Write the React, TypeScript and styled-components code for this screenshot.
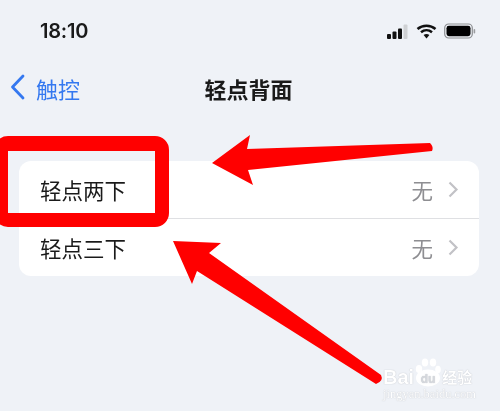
import React from "react";
import styled, { createGlobalStyle } from "styled-components";

const GlobalStyle = createGlobalStyle`
  html, body {
    margin: 0;
    padding: 0;
    background: #eff2f7;
  }
  * {
    box-sizing: border-box;
  }
`;

const cjk = `"Noto Sans CJK SC", "Noto Sans", sans-serif`;

const Screen = styled.div`
  position: relative;
  width: 500px;
  height: 411px;
  overflow: hidden;
  background: #eff2f7;
  font-family: ${cjk};
  color: #1a1a1a;
  filter: blur(0.35px);
`;

const StatusBar = styled.div`
  display: flex;
  justify-content: space-between;
  align-items: center;
  height: 20px;
  margin-top: 21px;
  padding: 0 24px 0 40px;
`;

const Time = styled.span`
  font-family: Inter, "Liberation Sans", sans-serif;
  font-size: 20px;
  font-weight: 600;
  letter-spacing: -0.2px;
`;

const StatusIcons = styled.div`
  display: flex;
  align-items: center;
  gap: 7px;
`;

const NavBar = styled.div`
  position: relative;
  display: flex;
  justify-content: center;
  align-items: center;
  height: 30px;
  margin-top: 32px;
  padding-right: 3px;
`;

const Back = styled.div`
  position: absolute;
  left: 10px;
  top: 0;
  height: 30px;
  display: flex;
  align-items: center;
  gap: 11px;
  color: #3478f0;
  font-size: 22px;
`;

const BackIcon = styled.svg`
  margin-top: -2px;
`;

const Title = styled.span`
  font-size: 22px;
  font-weight: 700;
`;

const Card = styled.div`
  margin: 58px 21px 0 19px;
  background: #fff;
  border-radius: 12px;
`;

const Row = styled.div<{ $divider?: boolean }>`
  display: flex;
  align-items: center;
  height: ${(p) => (p.$divider ? "58px" : "57px")};
  padding: 0 20px 0 21px;
  font-size: 21.5px;
  border-top: ${(p) => (p.$divider ? "1px solid #dfe0e3" : "none")};
`;

const Label = styled.span`
  flex: 1;
`;

const Value = styled.span`
  color: #8e8e92;
  margin-right: 15px;
`;

const Overlay = styled.svg`
  position: absolute;
  left: 0;
  top: 0;
`;

const Highlight = styled.div`
  position: absolute;
  left: -6px;
  top: 136px;
  width: 175px;
  height: 91px;
  border: 15px solid #ff0000;
  border-width: 15px 14px 14px 14px;
  border-radius: 14px;
`;

const Watermark = styled.div`
  position: absolute;
  left: 383px;
  top: 357px;
  width: 112px;
  color: #fff;
  text-shadow: 0 0 1px rgba(120, 125, 135, 0.55);
`;

const WatermarkTop = styled.div`
  display: flex;
  align-items: flex-end;
  height: 31px;
  font-family: "Liberation Sans", sans-serif;
  font-size: 20px;
  font-weight: 700;
  line-height: 22px;
`;

const WatermarkCn = styled.span`
  font-family: ${cjk};
  font-size: 15px;
  line-height: 22px;
  margin-left: 1px;
`;

const WatermarkUrl = styled.div`
  font-family: "Liberation Serif", serif;
  font-size: 12.5px;
  line-height: 12px;
  white-space: nowrap;
`;

const Chevron = () => (
  <svg width="11" height="17" viewBox="0 0 11 17">
    <path d="M1.5 1.5 L8.5 8.5 L1.5 15.5" fill="none" stroke="#c2c2c6" strokeWidth="2.2" />
  </svg>
);

const Rows = [
  { text: "轻点两下", divider: false },
  { text: "轻点三下", divider: true },
];

export default function App() {
  return (
    <Screen>
      <GlobalStyle />
      <StatusBar>
        <Time>18:10</Time>
        <StatusIcons>
          <svg width="22" height="15" viewBox="0 0 22 15">
            <rect x="0" y="10" width="4" height="5" rx="1" fill="#111" />
            <rect x="5.5" y="7.5" width="4" height="7.5" rx="1" fill="#111" />
            <rect x="11" y="4.5" width="4" height="10.5" rx="1" fill="#111" />
            <rect x="16.5" y="0.5" width="4" height="14.5" rx="1" fill="#cfd1d4" />
          </svg>
          <svg width="21" height="15" viewBox="0 0 21 15">
            <path d="M1.5 5 C6.5 0.6 14.5 0.6 19.5 5" fill="none" stroke="#111" strokeWidth="2.5" />
            <path d="M5 8.2 C8.2 5.5 12.8 5.5 16 8.2" fill="none" stroke="#111" strokeWidth="2.5" />
            <path d="M7.6 11 L10.5 14.5 L13.4 11 C11.6 9.6 9.4 9.6 7.6 11 Z" fill="#111" />
          </svg>
          <svg width="32" height="16" viewBox="0 0 32 16">
            <rect x="0.7" y="1" width="27.6" height="14" rx="4" fill="none" stroke="#8d8f92" strokeWidth="1.2" />
            <rect x="2.5" y="2.8" width="24" height="10.4" rx="2.4" fill="#000" />
            <rect x="29.6" y="6" width="1.6" height="4.5" rx="0.8" fill="#9a9c9f" />
          </svg>
        </StatusIcons>
      </StatusBar>
      <NavBar>
        <Back>
          <BackIcon width="15" height="26" viewBox="0 0 15 26">
            <path d="M13 2 L2.5 13 L13 24" fill="none" stroke="#3478f0" strokeWidth="2.8" strokeLinecap="round" strokeLinejoin="round" />
          </BackIcon>
          <span>触控</span>
        </Back>
        <Title>轻点背面</Title>
      </NavBar>
      <Card>
        {Rows.map((row) => (
          <Row key={row.text} $divider={row.divider}>
            <Label>{row.text}</Label>
            <Value>无</Value>
            <Chevron />
          </Row>
        ))}
      </Card>
      <Highlight />
      <Overlay width="500" height="411" viewBox="0 0 500 411">
        <path d="M212 163 L250 135 L247 149 L430 143 Q434 147 432 151 L248 170 L253 185 Z" fill="#ff0000" />
        <path d="M173 241 L221 243 L209 253 L381 375 Q384 381 376 384 L197 271 L192 284 Z" fill="#ff0000" />
      </Overlay>
      <Watermark>
        <WatermarkTop>
          Bai
          <svg width="27" height="31" viewBox="0 0 27 31">
            <ellipse cx="14" cy="21" rx="12" ry="8.5" fill="#fff" />
            <ellipse cx="5" cy="12" rx="3.2" ry="4" fill="#fff" />
            <ellipse cx="11" cy="5.5" rx="3.2" ry="4" fill="#fff" />
            <ellipse cx="19" cy="5.5" rx="3.2" ry="4" fill="#fff" />
            <ellipse cx="24" cy="12.5" rx="2.8" ry="3.8" fill="#fff" />
            <text x="14" y="26" textAnchor="middle" fontSize="12" fontWeight="700" fontFamily="Liberation Sans" fill="#d5d8dd">du</text>
          </svg>
          <WatermarkCn>经验</WatermarkCn>
        </WatermarkTop>
        <WatermarkUrl>jingyan.baidu.com</WatermarkUrl>
      </Watermark>
    </Screen>
  );
}
